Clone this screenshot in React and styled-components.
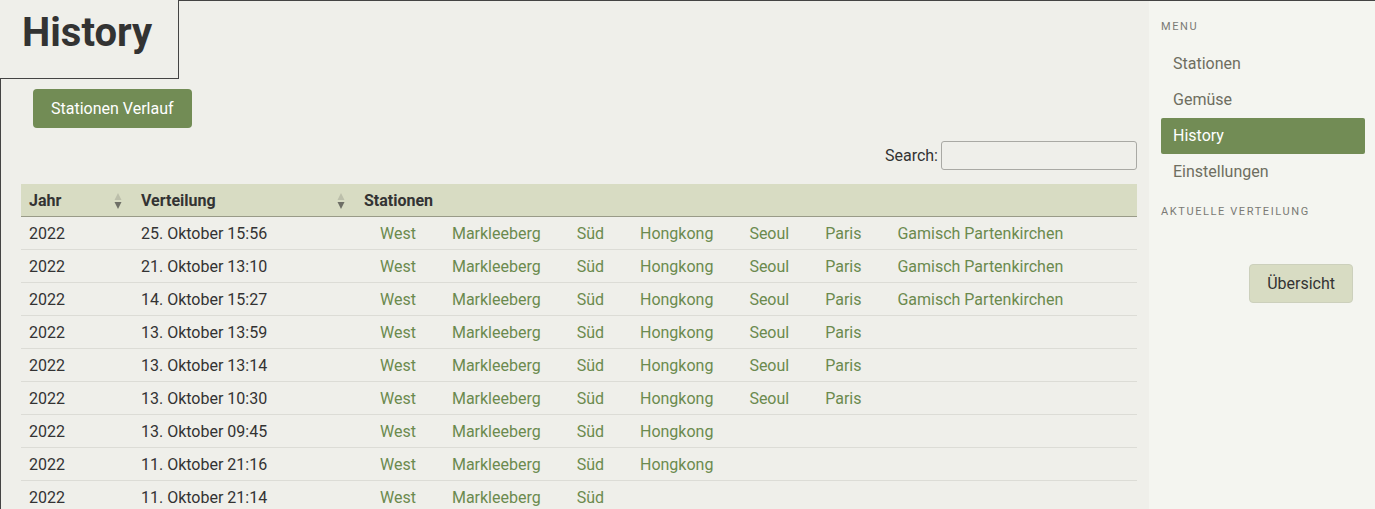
import React from 'react'
import styled, { createGlobalStyle } from 'styled-components'

const GlobalStyle = createGlobalStyle`
  html, body {
    margin: 0;
    padding: 0;
    background: #efefea;
    font-family: Roboto, 'Liberation Sans', sans-serif;
    color: #333;
    overflow: hidden;
  }
`

const rows = [
  { year: 2022, date: '25. Oktober 15:56', stations: ['West', 'Markleeberg', 'Süd', 'Hongkong', 'Seoul', 'Paris', 'Gamisch Partenkirchen'] },
  { year: 2022, date: '21. Oktober 13:10', stations: ['West', 'Markleeberg', 'Süd', 'Hongkong', 'Seoul', 'Paris', 'Gamisch Partenkirchen'] },
  { year: 2022, date: '14. Oktober 15:27', stations: ['West', 'Markleeberg', 'Süd', 'Hongkong', 'Seoul', 'Paris', 'Gamisch Partenkirchen'] },
  { year: 2022, date: '13. Oktober 13:59', stations: ['West', 'Markleeberg', 'Süd', 'Hongkong', 'Seoul', 'Paris'] },
  { year: 2022, date: '13. Oktober 13:14', stations: ['West', 'Markleeberg', 'Süd', 'Hongkong', 'Seoul', 'Paris'] },
  { year: 2022, date: '13. Oktober 10:30', stations: ['West', 'Markleeberg', 'Süd', 'Hongkong', 'Seoul', 'Paris'] },
  { year: 2022, date: '13. Oktober 09:45', stations: ['West', 'Markleeberg', 'Süd', 'Hongkong'] },
  { year: 2022, date: '11. Oktober 21:16', stations: ['West', 'Markleeberg', 'Süd', 'Hongkong'] },
  { year: 2022, date: '11. Oktober 21:14', stations: ['West', 'Markleeberg', 'Süd'] },
]

const menu = ['Stationen', 'Gemüse', 'History', 'Einstellungen']

function SortIcon() {
  return (
    <SortSvg width='8' height='18' viewBox='0 0 8 18'>
      <path d='M4 1 L7.5 8 H0.5 Z' fill='#bcbfab' />
      <path d='M4 17 L7.5 10 H0.5 Z' fill='#6e6f66' />
    </SortSvg>
  )
}

function App() {
  return (
    <Page>
      <GlobalStyle />
      <Main>
        <Header>
          <TitleTab>
            <h1>History</h1>
          </TitleTab>
          <HeaderLine />
        </Header>
        <Content>
          <PrimaryButton>Stationen Verlauf</PrimaryButton>
          <SearchRow>
            <label htmlFor='search'>Search:</label>
            <input id='search' type='search' />
          </SearchRow>
          <Table>
            <colgroup>
              <col style={{ width: 112 }} />
              <col style={{ width: 223 }} />
              <col />
            </colgroup>
            <thead>
              <tr>
                <Th>
                  Jahr
                  <SortIcon />
                </Th>
                <Th>
                  Verteilung
                  <SortIcon />
                </Th>
                <Th>Stationen</Th>
              </tr>
            </thead>
            <tbody>
              {rows.map((row, i) => (
                <tr key={i}>
                  <Td>{row.year}</Td>
                  <Td>{row.date}</Td>
                  <Td>
                    {row.stations.map((s) => (
                      <React.Fragment key={s}>
                        <StationLink href='#'>{s}</StationLink>{' '}
                      </React.Fragment>
                    ))}
                  </Td>
                </tr>
              ))}
            </tbody>
          </Table>
        </Content>
      </Main>
      <Sidebar>
        <SectionTitle>Menu</SectionTitle>
        <MenuList>
          {menu.map((item) => (
            <MenuItem key={item} $active={item === 'History'}>
              {item}
            </MenuItem>
          ))}
        </MenuList>
        <SectionTitle $spaced>Aktuelle Verteilung</SectionTitle>
        <OverviewButton>Übersicht</OverviewButton>
      </Sidebar>
    </Page>
  )
}

const Page = styled.div`
  display: flex;
  height: 509px;
  overflow: hidden;
`

const Main = styled.main`
  flex: 1;
  display: flex;
  flex-direction: column;
  min-width: 0;
`

const Header = styled.div`
  display: flex;
`

const TitleTab = styled.div`
  width: 179px;
  height: 79px;
  box-sizing: border-box;
  border-right: 1px solid #444;
  border-bottom: 1px solid #444;
  padding: 0 22px;

  h1 {
    margin: 0;
    font-size: 40px;
    line-height: 66px;
    font-weight: 700;
    color: #333;
  }
`

const HeaderLine = styled.div`
  flex: 1;
  border-top: 1px solid #444;
`

const Content = styled.section`
  flex: 1;
  border-left: 1px solid #444;
  padding: 10px 12px 0 20px;
`

const PrimaryButton = styled.button`
  margin-left: 12px;
  height: 39px;
  padding: 0 18px;
  background: #728c55;
  color: #fff;
  border: none;
  border-radius: 4px;
  font-family: inherit;
  font-size: 16px;
  cursor: pointer;
`

const SearchRow = styled.div`
  display: flex;
  justify-content: flex-end;
  align-items: center;
  gap: 3px;
  margin-top: 13px;
  font-size: 16px;

  input {
    width: 196px;
    height: 29px;
    box-sizing: border-box;
    border: 1px solid #a9a9a4;
    border-radius: 3px;
    background: #efefea;
    font-family: inherit;
  }
`

const Table = styled.table`
  width: 100%;
  table-layout: fixed;
  margin-top: 14px;
  border-collapse: collapse;
  font-size: 16px;

  thead tr {
    background: #d8dcc3;
    border-bottom: 1px solid #999b88;
  }

  tbody tr {
    border-bottom: 1px solid #dcdcd6;
  }
`

const Th = styled.th`
  position: relative;
  height: 32px;
  padding: 0 8px;
  text-align: left;
  font-weight: 700;
  color: #333;
`

const SortSvg = styled.svg`
  position: absolute;
  right: 11px;
  top: 8px;
`

const Td = styled.td`
  height: 32px;
  padding: 0 8px;
  color: #333;
  white-space: nowrap;
`

const StationLink = styled.a`
  padding: 0 16px;
  color: #6b8a4e;
  text-decoration: none;
`

const Sidebar = styled.aside`
  width: 226px;
  flex-shrink: 0;
  background: #f4f5f0;
  border-top: 1px solid #444;
  padding: 0 10px 0 12px;
  box-sizing: border-box;
  display: flex;
  flex-direction: column;
`

const SectionTitle = styled.div`
  margin-top: ${(p) => (p.$spaced ? '15px' : '19px')};
  font-size: 11px;
  letter-spacing: 1.6px;
  text-transform: uppercase;
  color: #7a7a75;
`

const MenuList = styled.nav`
  display: flex;
  flex-direction: column;
  margin-top: 13px;
`

const MenuItem = styled.a`
  height: 36px;
  line-height: 36px;
  padding: 0 12px;
  font-size: 16px;
  border-radius: 2px;
  color: ${(p) => (p.$active ? '#fff' : '#6e6e60')};
  background: ${(p) => (p.$active ? '#728c55' : 'transparent')};
`

const OverviewButton = styled.button`
  align-self: flex-end;
  margin: 46px 12px 0 0;
  height: 39px;
  padding: 0 17px;
  background: #d8dcc3;
  border: 1px solid #ccd0bc;
  border-radius: 4px;
  font-family: inherit;
  font-size: 16px;
  color: #333;
`

export default App
